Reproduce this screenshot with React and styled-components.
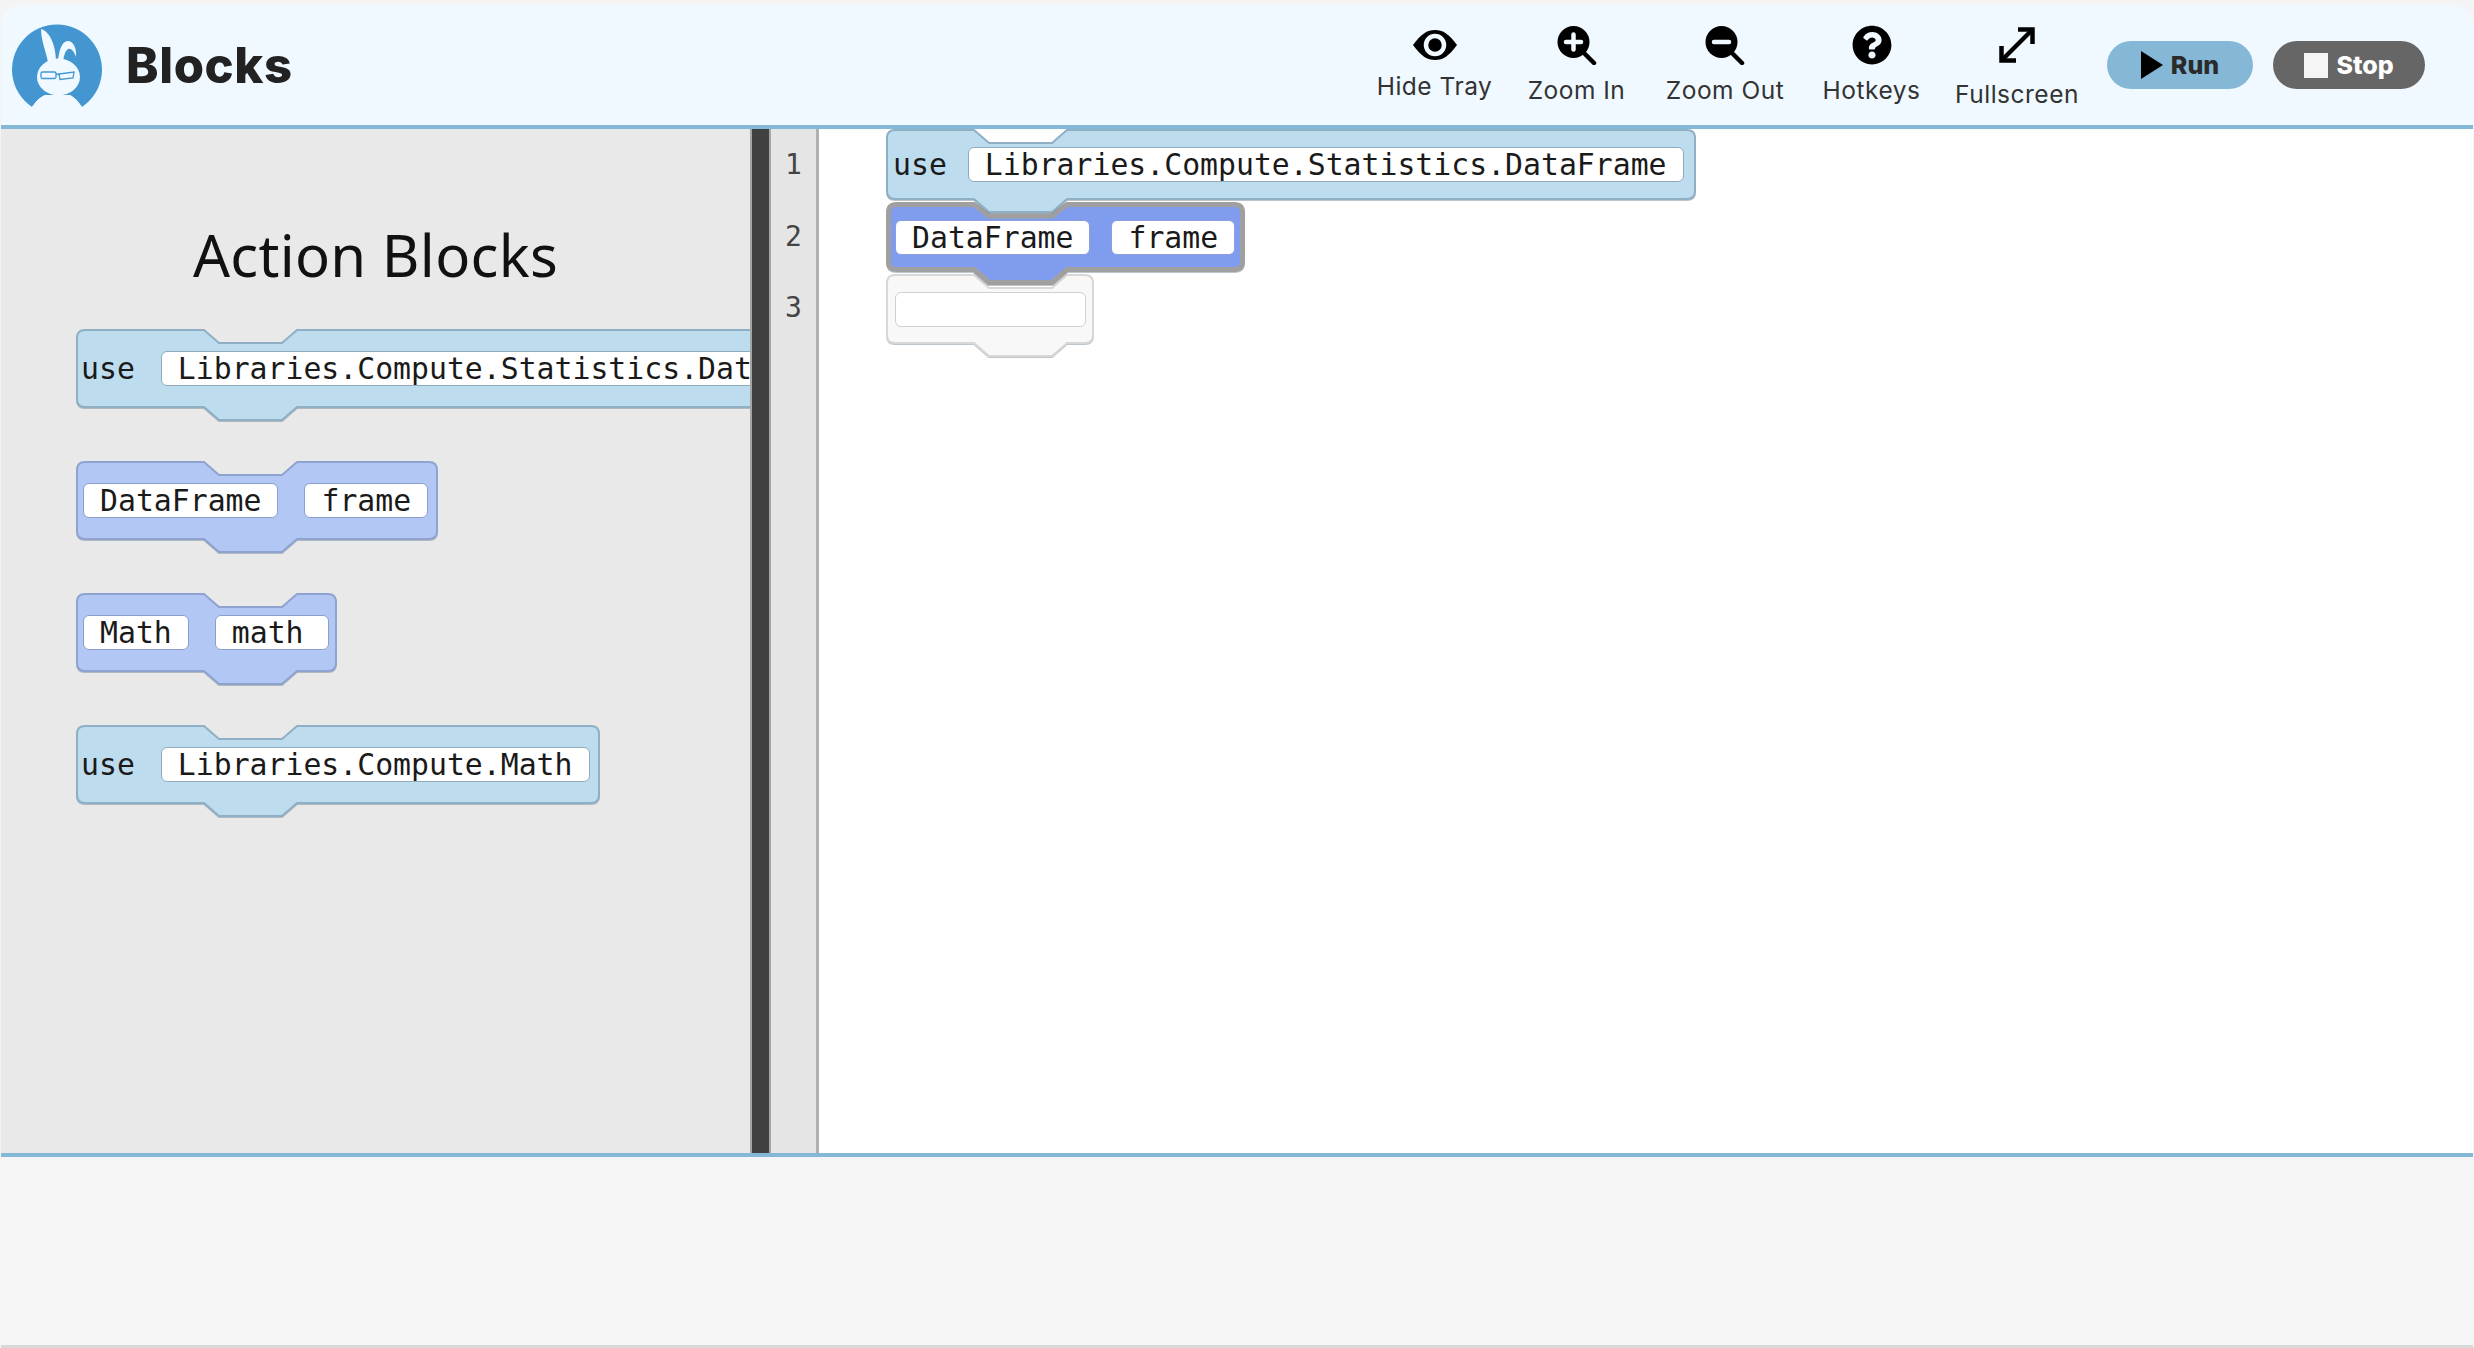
import React from "react";
import styled, { createGlobalStyle } from "styled-components";
import { FaQuestionCircle } from "react-icons/fa";

const HEADER_BG = "#f0f9ff";

const GlobalStyle = createGlobalStyle`
  html, body {
    margin: 0;
    padding: 0;
    background: #f4f4f4;
  }
  * {
    box-sizing: border-box;
  }
`;

const Page = styled.div`
  width: 2474px;
  height: 1348px;
  padding: 5px 1px 0;
  display: flex;
  flex-direction: column;
  overflow: hidden;
  font-family: Inter, "Liberation Sans", sans-serif;
`;

const Header = styled.header`
  flex: 0 0 124px;
  display: flex;
  align-items: center;
  padding: 0 48px 0 7px;
  background: ${HEADER_BG};
  border-bottom: 4px solid #84b8d6;
  border-radius: 20px 20px 0 0;
`;

const Brand = styled.h1`
  margin: 0 0 0 18px;
  font-size: 49px;
  font-weight: 800;
  letter-spacing: 0.6px;
  color: #222;
`;

const Tools = styled.nav`
  margin-left: auto;
  align-self: flex-start;
  padding-top: 20px;
  display: flex;
  gap: 38px;
`;

const Tool = styled.div`
  width: ${(p) => p.$width}px;
  display: flex;
  flex-direction: column;
  align-items: center;
  color: #000;
`;

const ToolLabel = styled.span`
  margin-top: ${(p) => p.$drop}px;
  font-size: 24.5px;
  line-height: 28px;
  letter-spacing: 0.5px;
  color: #333;
  white-space: nowrap;
`;

const Buttons = styled.div`
  margin-left: 30px;
  display: flex;
  gap: 20px;
`;

const RunButton = styled.button`
  width: ${(p) => p.$width}px;
  height: 48px;
  display: flex;
  align-items: center;
  justify-content: center;
  gap: 8px;
  padding: 0;
  border: none;
  border-radius: 24px;
  background: ${(p) => p.$bg};
  color: ${(p) => p.$color};
  font-family: inherit;
  font-size: 25px;
  font-weight: 800;
`;

const Body = styled.main`
  flex: 0 0 1024px;
  display: flex;
  min-height: 0;
`;

const Tray = styled.aside`
  flex: 0 0 749px;
  display: flex;
  flex-direction: column;
  align-items: flex-start;
  gap: 53px;
  padding: 86px 0 0 75px;
  background: #e9e9e9;
  overflow: hidden;
`;

const TrayTitle = styled.h2`
  align-self: stretch;
  margin: 0 0 -19px -75px;
  text-align: center;
  font-family: "Noto Sans", sans-serif;
  font-size: 58px;
  line-height: 80px;
  font-weight: 400;
  letter-spacing: 0.3px;
  color: #111;
`;

const Divider = styled.div`
  flex: 0 0 21px;
  background: #404040;
  border-left: 2px solid #a5a5a5;
  border-right: 2px solid #a5a5a5;
`;

const Gutter = styled.div`
  flex: 0 0 48px;
  background: #e5e5e5;
  border-right: 3px solid #b0b0b0;
`;

const LineNumber = styled.div`
  height: 71.5px;
  display: flex;
  align-items: center;
  justify-content: center;
  font-family: "DejaVu Sans Mono", monospace;
  font-size: 28px;
  color: #444;
`;

const Editor = styled.section`
  flex: 1;
  display: flex;
  flex-direction: column;
  align-items: flex-start;
  gap: 2px;
  padding-left: 67px;
  background: #fff;
`;

const BlockBox = styled.div`
  position: relative;
  flex: none;
  z-index: ${(p) => p.$z || 0};
  width: ${(p) => p.$width}px;
  height: ${(p) => p.$height}px;
  display: flex;
  align-items: center;
  gap: ${(p) => (p.$compact ? 21 : 26)}px;
  padding-left: ${(p) => (p.$compact ? 9 : 7)}px;
  font-family: "DejaVu Sans Mono", monospace;
  font-size: 29.8px;
  color: #1a1a1a;
`;

const BlockShape = styled.svg`
  position: absolute;
  left: 0;
  top: 0;
  overflow: visible;
  filter: drop-shadow(0 1px 0 rgba(90, 110, 130, 0.4));
`;

const Word = styled.span`
  position: relative;
  margin-left: -2px;
  white-space: pre;
`;

const Field = styled.span`
  position: relative;
  flex: none;
  height: 35px;
  min-width: ${(p) => p.$min || 0}px;
  padding: 0 16px;
  display: flex;
  align-items: center;
  background: #fff;
  border: 1.5px solid ${(p) => p.$edge};
  border-radius: 6px;
  white-space: pre;
`;

const Console = styled.footer`
  flex: 0 0 195px;
  background: #f5f5f5;
  border-top: 4px solid #84b8d6;
  border-bottom: 3px solid #d8d8d8;
`;

const PALETTE = {
  use: { fill: "#bddcee", stroke: "#8fafc4", edge: "#8fabbd" },
  name: { fill: "#b3c7f5", stroke: "#8ea3cf", edge: "#8a9fcc" },
  selected: { fill: "#7f9cef", stroke: "#a0a0a0", edge: "#8a9fdc" },
  empty: { fill: "#f8f8f8", stroke: "#d8d8d8", edge: "#d0d0d0" },
};

const blockPath = (w, h, n, s) => {
  const i = s / 2;
  const r = 8;
  const right = w - i;
  const bottom = h - i;
  return [
    `M${i + r} ${i}`,
    `H${n}`,
    `L${n + 15} 14`,
    `H${n + 78}`,
    `L${n + 93} ${i}`,
    `H${right - r}`,
    `Q${right} ${i} ${right} ${i + r}`,
    `V${bottom - r}`,
    `Q${right} ${bottom} ${right - r} ${bottom}`,
    `H${n + 93}`,
    `L${n + 78} ${bottom + 13}`,
    `H${n + 15}`,
    `L${n} ${bottom}`,
    `H${i + r}`,
    `Q${i} ${bottom} ${i} ${bottom - r}`,
    `V${i + r}`,
    `Q${i} ${i} ${i + r} ${i}`,
    "Z",
  ].join(" ");
};

// word: plain text before the fields, fields: [text, min width]
const Block = ({ kind, width, height = 79, notch = 128, strokeWidth = 2, compact, z, word, fields }) => {
  const colors = PALETTE[kind];
  return (
    <BlockBox $width={width} $height={height} $compact={compact} $z={z}>
      <BlockShape width={width} height={height}>
        <path
          d={blockPath(width, height, notch, strokeWidth)}
          fill={colors.fill}
          stroke={colors.stroke}
          strokeWidth={strokeWidth}
          strokeLinejoin="round"
        />
      </BlockShape>
      {word && <Word>{word}</Word>}
      {fields.map(([text, min], i) => (
        <Field key={i} $edge={colors.edge} $min={min}>
          {text}
        </Field>
      ))}
    </BlockBox>
  );
};

const Logo = () => (
  <svg width="100" height="90" viewBox="0 0 100 90">
    <path
      d="M24 87 A45 45 0 1 1 74 87 C70 81 66 77 62 75 L37 75 C32 77 28 81 24 87 Z"
      fill="#4396d0"
    />
    <g fill={HEADER_BG}>
      <ellipse cx="50.5" cy="57" rx="21.5" ry="18.5" />
      <path d="M33 9 C41 11 48 24 48 42 L40 42 C38 32 33 20 33 9 Z" />
      <path d="M50 41 C51 30 54 21 60 21 C65 21 69 28 68 37 C66 31 63 28 60 29 C57 31 56 36 55 41 Z" />
      <path d="M24 87 C28 81 32 77 37 75 L62 75 C66 77 70 81 74 87 Z" />
    </g>
    <g fill="none" stroke="#4396d0" strokeWidth="1.3">
      <rect x="33" y="52" width="15" height="6.5" rx="1.5" />
      <path d="M51 54 L66 52 L65 58 L52 59.5 Z" />
      <path d="M48 54 L51 54.5" />
    </g>
  </svg>
);

const EyeIcon = () => (
  <svg width="44" height="40" viewBox="0 0 44 40">
    <path d="M0 20 C8 9 14 5 22 5 C30 5 36 9 44 20 C36 31 30 35 22 35 C14 35 8 31 0 20 Z" fill="#000" />
    <circle cx="22" cy="20" r="9" fill="#000" stroke={HEADER_BG} strokeWidth="4.5" />
  </svg>
);

const ZoomIcon = ({ plus }) => (
  <svg width="40" height="40" viewBox="0 0 40 40">
    <circle cx="16.5" cy="17" r="16" fill="#000" />
    <path d="M27 28 L37 38" stroke="#000" strokeWidth="4.5" strokeLinecap="round" />
    <path d="M9 17 H24" stroke={HEADER_BG} strokeWidth="4.5" strokeLinecap="round" />
    {plus && <path d="M16.5 9.5 V24.5" stroke={HEADER_BG} strokeWidth="4.5" strokeLinecap="round" />}
  </svg>
);

const FullscreenIcon = () => (
  <svg width="40" height="40" viewBox="0 0 40 40" fill="none" stroke="#000" strokeWidth="4.5">
    <path d="M6 34 L34 6" />
    <path d="M21 4.5 H35.5 V19" />
    <path d="M4.5 21 V35.5 H19" />
  </svg>
);

const PlayIcon = () => (
  <svg width="22" height="28" viewBox="0 0 22 28">
    <path d="M0 0 L22 14 L0 28 Z" fill="#000" />
  </svg>
);

const StopIcon = () => (
  <svg width="24" height="25" viewBox="0 0 24 25">
    <rect width="24" height="25" fill="#f5f5f5" />
  </svg>
);

const App = () => (
  <Page>
    <GlobalStyle />
    <Header>
      <Logo />
      <Brand>Blocks</Brand>
      <Tools>
        <Tool $width={109}>
          <EyeIcon />
          <ToolLabel $drop={7}>Hide Tray</ToolLabel>
        </Tool>
        <Tool $width={99}>
          <ZoomIcon plus />
          <ToolLabel $drop={11}>Zoom In</ToolLabel>
        </Tool>
        <Tool $width={122}>
          <ZoomIcon />
          <ToolLabel $drop={11}>Zoom Out</ToolLabel>
        </Tool>
        <Tool $width={95}>
          <FaQuestionCircle size={40} />
          <ToolLabel $drop={11}>Hotkeys</ToolLabel>
        </Tool>
        <Tool $width={120}>
          <FullscreenIcon />
          <ToolLabel $drop={15}>Fullscreen</ToolLabel>
        </Tool>
      </Tools>
      <Buttons>
        <RunButton $width={146} $bg="#84b8d6" $color="#2a2a2a">
          <PlayIcon />
          Run
        </RunButton>
        <RunButton $width={152} $bg="#666" $color="#fff">
          <StopIcon />
          Stop
        </RunButton>
      </Buttons>
    </Header>
    <Body>
      <Tray>
        <TrayTitle>Action Blocks</TrayTitle>
        <Block kind="use" width={889} word="use" fields={[["Libraries.Compute.Statistics.DataFrame"]]} />
        <Block kind="name" width={362} fields={[["DataFrame"], ["frame"]]} />
        <Block kind="name" width={261} fields={[["Math"], ["math", 114]]} />
        <Block kind="use" width={524} word="use" fields={[["Libraries.Compute.Math"]]} />
      </Tray>
      <Divider />
      <Gutter>
        <LineNumber>1</LineNumber>
        <LineNumber>2</LineNumber>
        <LineNumber>3</LineNumber>
      </Gutter>
      <Editor>
        <Block
          kind="use"
          width={810}
          height={71}
          notch={88}
          compact
          z={3}
          word="use"
          fields={[["Libraries.Compute.Statistics.DataFrame"]]}
        />
        <Block
          kind="selected"
          width={359}
          height={70}
          notch={88}
          strokeWidth={5}
          compact
          z={2}
          fields={[["DataFrame"], ["frame"]]}
        />
        <Block kind="empty" width={208} height={70} notch={88} compact z={1} fields={[["", 191]]} />
      </Editor>
    </Body>
    <Console />
  </Page>
);

export default App;
